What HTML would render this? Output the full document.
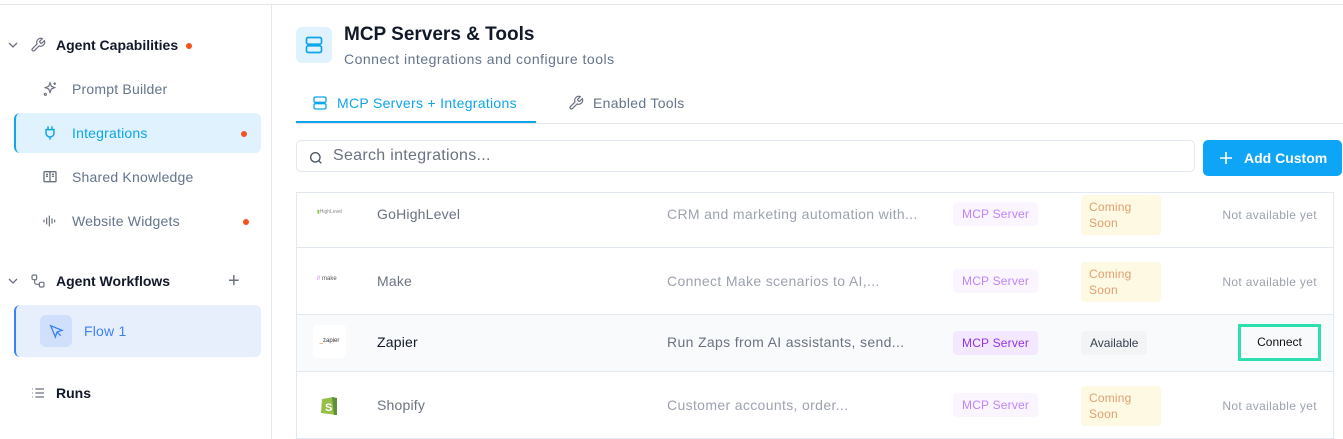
<!DOCTYPE html>
<html><head><meta charset="utf-8"><style>
*{box-sizing:border-box;margin:0;padding:0}
body{width:1343px;height:439px;overflow:hidden;background:#fff;font-family:"Liberation Sans",sans-serif;position:relative;color:#111827}
.a{position:absolute}
.topline{left:0;top:4px;width:1343px;height:1px;background:#e5e7eb}
.side{left:271px;top:5px;width:1px;height:434px;background:#e5e7eb}
.sh{font-size:14px;font-weight:bold;color:#111827}
.si{font-size:14px;color:#64748b;letter-spacing:.2px}
.dot{width:6px;height:6px;border-radius:3px;background:#f4511e}
.row{left:296px;width:1038px;border-left:1px solid #e2e8f0;border-right:1px solid #e2e8f0;border-bottom:1px solid #e2e8f0}
.name{left:80px;font-size:14px;color:#6b7280;letter-spacing:.2px}
.desc{left:370px;font-size:14px;color:#9ca3af;letter-spacing:.35px}
.mcp{left:656px;background:#faf5ff;color:#c084fc;font-size:12px;padding:0 9px;height:24px;line-height:24px;border-radius:4px;letter-spacing:.2px}
.cs{left:784px;width:80px;height:40px;background:#fef9e3;color:#e0a070;font-size:12px;line-height:16px;padding:4px 8px;border-radius:4px;letter-spacing:.2px}
.na{right:16px;font-size:12px;color:#9ca3af;letter-spacing:.35px}
</style></head><body>
<div class="a topline"></div>
<div class="a side"></div>

<svg class="a" style="left:7px;top:40px" width="12" height="10" viewBox="0 0 12 10"><path d="M2 3l4 4 4-4" fill="none" stroke="#6b7280" stroke-width="1.3"/></svg>
<svg class="a" style="left:30px;top:37px" width="16" height="16" viewBox="0 0 24 24" fill="none" stroke="#6b7280" stroke-width="1.8"><path d="M14.7 6.3a1 1 0 000 1.4l1.6 1.6a1 1 0 001.4 0l3.8-3.8a6 6 0 01-7.9 7.9l-6.9 6.9a2.1 2.1 0 01-3-3l6.9-6.9a6 6 0 017.9-7.9z"/></svg>
<div class="a sh" style="left:56px;top:37px">Agent Capabilities</div>
<div class="a dot" style="left:186px;top:43px"></div>

<svg class="a" style="left:42px;top:81px" width="16" height="16" viewBox="0 0 24 24" fill="none" stroke="#6b7280" stroke-width="1.8"><path d="M12 3l2 5 5 2-5 2-2 5-2-5-5-2 5-2z"/><path d="M19 2v4M17 4h4"/><circle cx="5" cy="20" r="1.5"/></svg>
<div class="a si" style="left:72px;top:81px">Prompt Builder</div>

<div class="a" style="left:14px;top:113px;width:247px;height:40px;background:#e0f2fe;border-left:2px solid #0ea5e9;border-radius:6px"></div>
<svg class="a" style="left:42px;top:125px" width="16" height="16" viewBox="0 0 24 24" fill="none" stroke="#0ea5e9" stroke-width="2.2"><path d="M9 2v5M15 2v5M6 7h12v5a6 6 0 01-12 0zM12 18v4"/></svg>
<div class="a si" style="left:72px;top:125px;color:#0ea5e9">Integrations</div>
<div class="a dot" style="left:241px;top:131px"></div>

<svg class="a" style="left:42px;top:169px" width="16" height="16" viewBox="0 0 24 24" fill="none" stroke="#6b7280" stroke-width="2"><rect x="3" y="4" width="18" height="15" rx="1"/><path d="M12 4v15M6 8h3M6 11h3M15 8h3M15 11h3"/></svg>
<div class="a si" style="left:72px;top:169px">Shared Knowledge</div>

<svg class="a" style="left:42px;top:213px" width="16" height="16" viewBox="0 0 24 24" fill="none" stroke="#6b7280" stroke-width="1.8"><path d="M3 10v4M7 7v10M11 4v16M15 8v8M19 10v4"/></svg>
<div class="a si" style="left:72px;top:213px">Website Widgets</div>
<div class="a dot" style="left:243px;top:219px"></div>

<svg class="a" style="left:7px;top:276px" width="12" height="10" viewBox="0 0 12 10"><path d="M2 3l4 4 4-4" fill="none" stroke="#6b7280" stroke-width="1.3"/></svg>
<svg class="a" style="left:30px;top:273px" width="16" height="16" viewBox="0 0 24 24" fill="none" stroke="#6b7280" stroke-width="1.8"><rect x="3" y="3" width="7" height="7" rx="2"/><rect x="14" y="14" width="7" height="7" rx="2"/><path d="M7 10v4a3 3 0 003 3h4"/></svg>
<div class="a sh" style="left:56px;top:273px">Agent Workflows</div>
<div class="a" style="left:228px;top:270px;font-size:20px;color:#6b7280">+</div>

<div class="a" style="left:14px;top:305px;width:247px;height:52px;background:#e8effc;border-left:2px solid #3b82f6;border-radius:6px"></div>
<div class="a" style="left:40px;top:315px;width:32px;height:32px;background:#d0dffb;border-radius:6px"></div>
<svg class="a" style="left:48px;top:323px" width="16" height="16" viewBox="0 0 24 24" fill="none" stroke="#3b82f6" stroke-width="2"><path d="M4 4l7 17 2.5-7.5L21 11z"/><path d="M14 14l5 5"/></svg>
<div class="a si" style="left:84px;top:323px;color:#3b82f6">Flow 1</div>

<svg class="a" style="left:30px;top:385px" width="16" height="16" viewBox="0 0 24 24" fill="none" stroke="#6b7280" stroke-width="1.8"><path d="M3 6h1M3 12h1M3 18h1M8 6h13M8 12h13M8 18h13"/></svg>
<div class="a sh" style="left:56px;top:385px">Runs</div>

<div class="a" style="left:296px;top:27px;width:36px;height:36px;background:#e0f2fe;border-radius:6px"></div>
<svg class="a" style="left:304px;top:35px" width="20" height="20" viewBox="0 0 24 24" fill="none" stroke="#0ea5e9" stroke-width="2"><rect x="3" y="3" width="18" height="8" rx="2"/><rect x="3" y="13" width="18" height="8" rx="2"/><path d="M7 7h.01M7 17h.01"/></svg>
<div class="a" style="left:344px;top:24px;font-size:19px;font-weight:bold;color:#111827">MCP Servers &amp; Tools</div>
<div class="a" style="left:344px;top:51px;font-size:14px;color:#64748b;letter-spacing:.5px">Connect integrations and configure tools</div>

<svg class="a" style="left:312px;top:95px" width="16" height="16" viewBox="0 0 24 24" fill="none" stroke="#0ea5e9" stroke-width="2"><rect x="3" y="3" width="18" height="8" rx="2"/><rect x="3" y="13" width="18" height="8" rx="2"/></svg>
<div class="a" style="left:337px;top:95px;font-size:14px;color:#0ea5e9;letter-spacing:.3px">MCP Servers + Integrations</div>
<svg class="a" style="left:568px;top:95px" width="16" height="16" viewBox="0 0 24 24" fill="none" stroke="#6b7280" stroke-width="1.8"><path d="M14.7 6.3a1 1 0 000 1.4l1.6 1.6a1 1 0 001.4 0l3.8-3.8a6 6 0 01-7.9 7.9l-6.9 6.9a2.1 2.1 0 01-3-3l6.9-6.9a6 6 0 017.9-7.9z"/></svg>
<div class="a" style="left:593px;top:95px;font-size:14px;color:#64748b;letter-spacing:.3px">Enabled Tools</div>
<div class="a" style="left:296px;top:123px;width:1047px;height:1px;background:#e5e7eb"></div>
<div class="a" style="left:296px;top:121px;width:240px;height:2px;background:#0ea5e9"></div>

<div class="a" style="left:296px;top:140px;width:899px;height:32px;border:1px solid #e2e8f0;border-radius:5px"></div>
<svg class="a" style="left:308px;top:150px" width="16" height="16" viewBox="0 0 24 24" fill="none" stroke="#4b5563" stroke-width="2"><circle cx="11" cy="11" r="7"/><path d="M20 20l-4-4"/></svg>
<div class="a" style="left:333px;top:147px;font-size:16px;color:#6b7280;letter-spacing:.3px">Search integrations...</div>
<div class="a" style="left:1203px;top:140px;width:139px;height:36px;background:#0ea5f6;border-radius:5px;color:#fff;font-size:14px;font-weight:bold;line-height:36px;padding-left:41px">Add Custom</div>
<svg class="a" style="left:1219px;top:151px" width="14" height="14" viewBox="0 0 14 14"><path d="M7 1v12M1 7h12" stroke="#fff" stroke-width="1.6"/></svg>

<div class="a" style="left:296px;top:192px;width:1038px;height:1px;background:#e2e8f0"></div>

<div class="a row" style="top:192px;height:56px">
 <div class="a" style="left:20px;top:17px;font-size:5px;color:#888"><span style="color:#8bc34a">▮</span>HighLevel</div>
 <div class="a name" style="top:14px">GoHighLevel</div>
 <div class="a desc" style="top:14px">CRM and marketing automation with...</div>
 <div class="a mcp" style="top:10px">MCP Server</div>
 <div class="a cs" style="top:3px">Coming<br>Soon</div>
 <div class="a na" style="top:16px">Not available yet</div>
</div>
<div class="a row" style="top:248px;height:67px">
 <div class="a" style="left:20px;top:28px;font-size:6px;color:#555"><span style="color:#c084fc">//</span> make</div>
 <div class="a name" style="top:25px">Make</div>
 <div class="a desc" style="top:25px">Connect Make scenarios to AI,...</div>
 <div class="a mcp" style="top:21px">MCP Server</div>
 <div class="a cs" style="top:14px">Coming<br>Soon</div>
 <div class="a na" style="top:27px">Not available yet</div>
</div>
<div class="a row" style="top:315px;height:57px;background:#f8fafc">
 <div class="a" style="left:16px;top:10px;width:33px;height:33px;background:#fff;border-radius:4px;font-size:6px;color:#333;text-align:center;line-height:33px"><span style="color:#ff4f00">_</span>zapier</div>
 <div class="a name" style="top:19px;color:#111827">Zapier</div>
 <div class="a desc" style="top:19px;color:#6b7280">Run Zaps from AI assistants, send...</div>
 <div class="a mcp" style="top:16px;background:#f3e8ff;color:#9333ea">MCP Server</div>
 <div class="a" style="left:784px;top:16px;background:#f3f4f6;color:#374151;font-size:12px;height:24px;line-height:24px;padding:0 9px;border-radius:4px">Available</div>
 <div class="a" style="left:941px;top:9px;width:83px;height:37px;border:3px solid #2ee0b0;font-size:12px;line-height:31px;text-align:center;color:#111">Connect</div>
</div>
<div class="a row" style="top:372px;height:67px">
 <svg class="a" style="left:22px;top:21px" width="20" height="24" viewBox="0 0 20 24"><path d="M3 6l12-2 3 18-16-2z" fill="#95bf47"/><path d="M13 4l5 1 0 17-3 0z" fill="#5e8e3e"/><text x="6" y="18" font-size="11" font-weight="bold" fill="#fff" font-family="Liberation Sans">S</text></svg>
 <div class="a name" style="top:25px">Shopify</div>
 <div class="a desc" style="top:25px">Customer accounts, order...</div>
 <div class="a mcp" style="top:21px">MCP Server</div>
 <div class="a cs" style="top:14px">Coming<br>Soon</div>
 <div class="a na" style="top:27px">Not available yet</div>
</div>
</body></html>
